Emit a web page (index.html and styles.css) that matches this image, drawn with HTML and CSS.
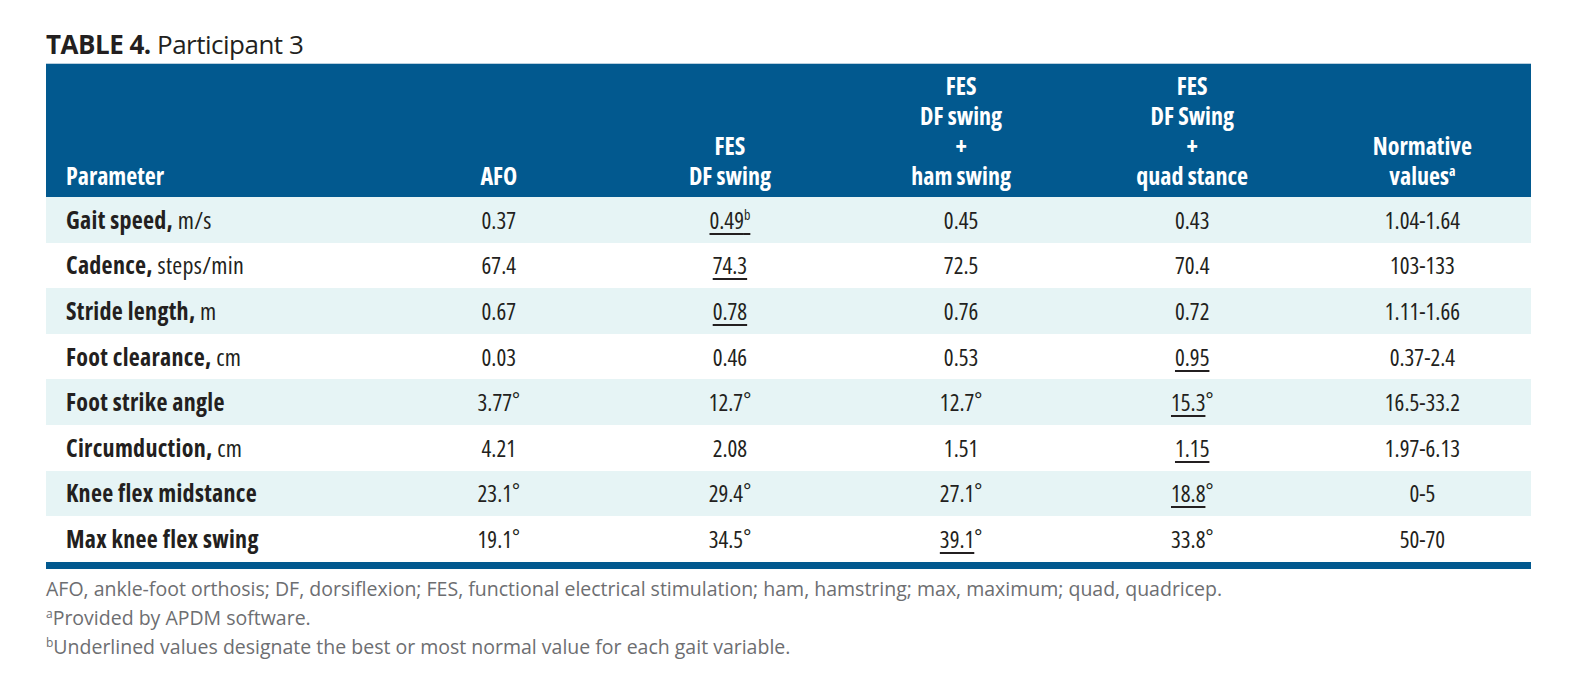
FILE: index.html
```html
<!DOCTYPE html>
<html lang="en">
<head>
<meta charset="utf-8">
<title>Table 4. Participant 3</title>
<link rel="stylesheet" href="styles.css">
</head>
<body>
<div class="page">
  <h1 class="title"><b>TABLE 4.</b> Participant 3</h1>
  <div class="table-wrap">
    <table class="data">
      <colgroup>
        <col class="c-param">
        <col class="c-val">
        <col class="c-val">
        <col class="c-val">
        <col class="c-val">
        <col class="c-norm">
      </colgroup>
      <thead>
        <tr>
          <th class="param">Parameter</th>
          <th>AFO</th>
          <th>FES<br>DF swing</th>
          <th>FES<br>DF swing<br>+<br>ham swing</th>
          <th>FES<br>DF Swing<br>+<br>quad stance</th>
          <th class="norm">Normative<br>values<sup>a</sup></th>
        </tr>
      </thead>
      <tbody>
        <tr class="alt">
          <td class="param"><b>Gait speed,</b> m/s</td>
          <td>0.37</td>
          <td><u>0.49<sup>b</sup></u></td>
          <td>0.45</td>
          <td>0.43</td>
          <td class="norm">1.04-1.64</td>
        </tr>
        <tr>
          <td class="param"><b>Cadence,</b> steps/min</td>
          <td>67.4</td>
          <td><u>74.3</u></td>
          <td>72.5</td>
          <td>70.4</td>
          <td class="norm">103-133</td>
        </tr>
        <tr class="alt">
          <td class="param"><b>Stride length,</b> m</td>
          <td>0.67</td>
          <td><u>0.78</u></td>
          <td>0.76</td>
          <td>0.72</td>
          <td class="norm">1.11-1.66</td>
        </tr>
        <tr>
          <td class="param"><b>Foot clearance,</b> cm</td>
          <td>0.03</td>
          <td>0.46</td>
          <td>0.53</td>
          <td><u>0.95</u></td>
          <td class="norm">0.37-2.4</td>
        </tr>
        <tr class="alt">
          <td class="param"><b>Foot strike angle</b></td>
          <td>3.77<span class="deg">°</span></td>
          <td>12.7<span class="deg">°</span></td>
          <td>12.7<span class="deg">°</span></td>
          <td><u>15.3</u><span class="deg">°</span></td>
          <td class="norm">16.5-33.2</td>
        </tr>
        <tr>
          <td class="param"><b>Circumduction,</b> cm</td>
          <td>4.21</td>
          <td>2.08</td>
          <td>1.51</td>
          <td><u>1.15</u></td>
          <td class="norm">1.97-6.13</td>
        </tr>
        <tr class="alt">
          <td class="param"><b>Knee flex midstance</b></td>
          <td>23.1<span class="deg">°</span></td>
          <td>29.4<span class="deg">°</span></td>
          <td>27.1<span class="deg">°</span></td>
          <td><u>18.8</u><span class="deg">°</span></td>
          <td class="norm">0-5</td>
        </tr>
        <tr>
          <td class="param"><b>Max knee flex swing</b></td>
          <td>19.1<span class="deg">°</span></td>
          <td>34.5<span class="deg">°</span></td>
          <td><u>39.1</u><span class="deg">°</span></td>
          <td>33.8<span class="deg">°</span></td>
          <td class="norm">50-70</td>
        </tr>
      </tbody>
    </table>
  </div>
  <div class="notes">
    <p>AFO, ankle-foot orthosis; DF, dorsiflexion; FES, functional electrical stimulation; ham, hamstring; max, maximum; quad, quadricep.</p>
    <p><sup>a</sup>Provided by APDM software.</p>
    <p><sup>b</sup>Underlined values designate the best or most normal value for each gait variable.</p>
  </div>
</div>
</body>
</html>
```

FILE: styles.css
```css
html, body {
  margin: 0;
  padding: 0;
  background: #ffffff;
}

body {
  font-family: "Open Sans", "DejaVu Sans Condensed", sans-serif;
  font-stretch: 75%;
  color: #231f20;
}

.page {
  padding: 28px 0 0 46px;
  width: 1485px;
}

.title {
  margin: 0 0 3px 0;
  font-size: 26px;
  font-stretch: 90%;
  letter-spacing: -0.5px;
  line-height: 32px;
  font-weight: 400;
  color: #231f20;
}

.title b {
  font-weight: 700;
}

.table-wrap {
  border-top: 1px solid #b9cfde;
  border-bottom: 7px solid #02598f;
}

.data {
  width: 1485px;
  table-layout: fixed;
  border-collapse: collapse;
  border-spacing: 0;
  font-size: 23px;
}

.c-param { width: 337px; }
.c-val { width: 231px; }
.c-norm { width: 223px; }

.data thead tr {
  background: #02598f;
}

.data th {
  color: #ffffff;
  font-size: 24px;
  font-weight: 700;
  text-align: center;
  vertical-align: bottom;
  line-height: 30px;
  padding: 7px 0 6px 0;
  height: 120px;
  box-sizing: content-box;
}

.data th.param {
  text-align: left;
  padding-left: 20px;
}

.data th.norm,
.data td.norm {
  padding-left: 6px;
}

.data td {
  height: 45.6px;
  padding: 0;
  text-align: center;
  vertical-align: middle;
  line-height: 28px;
  color: #231f20;
}

.data td.param {
  text-align: left;
  padding-left: 20px;
  font-size: 24px;
  letter-spacing: 0.3px;
}

.data td.param b {
  font-weight: 700;
}

.data tr.alt td {
  background: #e6f4f5;
}

.data u {
  text-decoration: underline;
  text-decoration-thickness: 2px;
  text-underline-offset: 4px;
}

.data sup {
  font-size: 14px;
  line-height: 0;
  vertical-align: 9px;
}

.deg {
  font-size: 22px;
  line-height: 0;
  vertical-align: 3px;
}

.notes {
  margin-top: 5px;
  color: #6d6e71;
  font-size: 19.5px;
  font-stretch: 90%;
  line-height: 29px;
}

.notes p {
  margin: 0;
}

.notes sup {
  font-size: 12px;
  line-height: 0;
  vertical-align: 7px;
}
```
